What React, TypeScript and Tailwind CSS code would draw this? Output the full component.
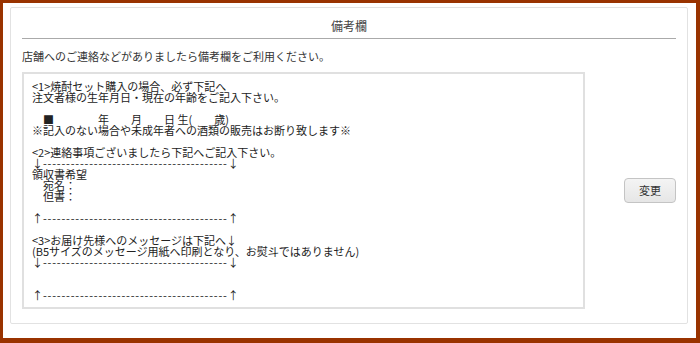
import React from 'react';

const DASH = '-'.repeat(40);

type Line = { text: string; dash?: [string, string] };

const noteLines: Line[] = [
  { text: '<1>焼酎セット購入の場合、必ず下記へ' },
  { text: '注文者様の生年月日・現在の年齢をご記入下さい。' },
  { text: '' },
  { text: '　■　　　　年　　月　　日 生(　　歳)' },
  { text: '※記入のない場合や未成年者への酒類の販売はお断り致します※' },
  { text: '' },
  { text: '<2>連絡事項ございましたら下記へご記入下さい。' },
  { text: '', dash: ['↓', '↓'] },
  { text: '領収書希望' },
  { text: '　宛名：' },
  { text: '　但書：' },
  { text: '' },
  { text: '', dash: ['↑', '↑'] },
  { text: '' },
  { text: '<3>お届け先様へのメッセージは下記へ↓' },
  { text: '(B5サイズのメッセージ用紙へ印刷となり、お熨斗ではありません)' },
  { text: '', dash: ['↓', '↓'] },
  { text: '' },
  { text: '' },
  { text: '', dash: ['↑', '↑'] },
];

export default function App() {
  return (
    <div className="w-[700px] h-[343px] bg-white border-[#993300] border-t-[3px] border-l-[3px] border-r-4 border-b-[5px] pt-[4px] pl-[7px] pr-[8px] pb-[14px] font-['Noto_Sans_CJK_JP',sans-serif] text-[#333]">
      <div className="h-full border border-[#e2e2e2] rounded-[2px] px-[11px]">
        <div className="border-b border-[#aaaaaa] pt-[10px] pb-[4px] text-center text-[12px] leading-[16px] text-[#444]">
          備考欄
        </div>
        <p className="mt-[10px] text-[11px] leading-[14px] text-[#333]">
          店舗へのご連絡などがありましたら備考欄をご利用ください。
        </p>
        <div className="mt-[9px] flex items-center">
          <div className="w-[563px] h-[237px] border-2 border-[#e0e0e0] bg-white pl-[8px] pt-[7px] text-[11px] leading-[11px] text-[#222] whitespace-pre overflow-hidden">
            {noteLines.map((line, i) => (
              <div key={i} className="h-[11px]">
                {line.dash ? (
                  <>
                    {line.dash[0]}
                    <span className="tracking-[0.8px]">{DASH}</span>
                    {line.dash[1]}
                  </>
                ) : (
                  line.text
                )}
              </div>
            ))}
          </div>
          <div className="flex-1 flex justify-end">
            <button className="w-[52px] h-[25px] rounded-[4px] border border-[#c4c4c4] bg-gradient-to-b from-[#f4f4f4] to-[#e6e6e6] text-[11px] text-[#333]">
              変更
            </button>
          </div>
        </div>
      </div>
    </div>
  );
}
